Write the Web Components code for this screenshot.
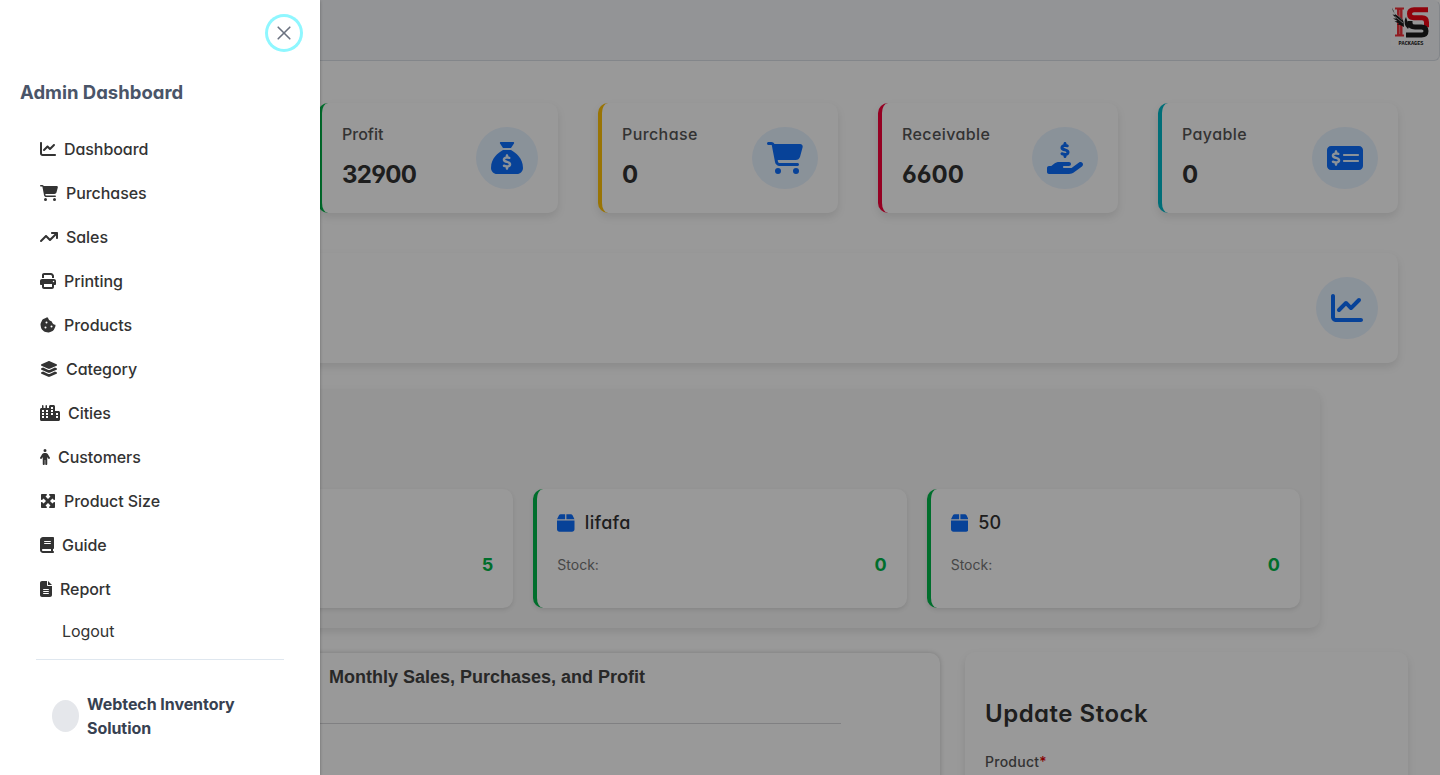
<!DOCTYPE html>
<html lang="en">
<head>
<meta charset="utf-8">
<title>Admin Dashboard</title>
<style>
html,body{margin:0;height:100%;overflow:hidden;background:#fff}
body{font-family:Inter,"Open Sans",sans-serif;font-feature-settings:"cv02","cv03","cv04","cv11"}
</style>
</head>
<body>
<inventory-app></inventory-app>
<script>
const ICONS={
chart:[512,'M64 64c0-17.7-14.3-32-32-32S0 46.3 0 64V400c0 44.2 35.8 80 80 80H480c17.7 0 32-14.3 32-32s-14.3-32-32-32H80c-8.8 0-16-7.2-16-16V64zm406.6 86.6c12.5-12.5 12.5-32.8 0-45.3s-32.8-12.5-45.3 0L320 210.7l-57.4-57.4c-12.5-12.5-32.8-12.5-45.3 0l-112 112c-12.5 12.5-12.5 32.8 0 45.3s32.8 12.5 45.3 0L240 221.3l57.4 57.4c12.5 12.5 32.8 12.5 45.3 0l128-128z'],
cart:[576,'M0 24C0 10.7 10.7 0 24 0H69.5c22 0 41.5 12.8 50.6 32h411c26.3 0 45.5 25 38.6 50.4l-41 152.3c-8.5 31.4-37 53.3-69.5 53.3H170.7l5.4 28.5c2.2 11.3 12.1 19.5 23.6 19.5H488c13.3 0 24 10.7 24 24s-10.7 24-24 24H199.7c-34.6 0-64.3-24.6-70.7-58.5L77.4 54.5c-.7-3.8-4-6.5-7.9-6.5H24C10.7 48 0 37.3 0 24zM128 464a48 48 0 1 1 96 0 48 48 0 1 1 -96 0zm336-48a48 48 0 1 1 0 96 48 48 0 1 1 0-96z'],
trend:[576,'M384 160c-17.7 0-32-14.3-32-32s14.3-32 32-32H544c17.7 0 32 14.3 32 32V288c0 17.7-14.3 32-32 32s-32-14.3-32-32V205.3L342.6 374.6c-12.5 12.5-32.8 12.5-45.3 0L192 269.3 54.6 406.6c-12.5 12.5-32.8 12.5-45.3 0s-12.5-32.8 0-45.3l160-160c12.5-12.5 32.8-12.5 45.3 0L320 306.7 466.7 160H384z'],
print:[512,'M128 0C92.7 0 64 28.7 64 64v96h64V64H354.7L384 93.3V160h64V93.3c0-17-6.7-33.3-18.7-45.3L400 18.7C388 6.7 371.7 0 354.7 0H128zM384 352v32 64H128V384 368 352H384zm64 32h32c17.7 0 32-14.3 32-32V256c0-35.3-28.7-64-64-64H64c-35.3 0-64 28.7-64 64v96c0 17.7 14.3 32 32 32H64v64c0 35.3 28.7 64 64 64H384c35.3 0 64-28.7 64-64V384zM432 248a24 24 0 1 1 0 48 24 24 0 1 1 0-48z'],
cookie:[512,'M257.5 27.6c-.8-5.4-4.9-9.8-10.3-10.6c-22.1-3.1-44.6 .9-64.4 11.4l-74 39.5C89.1 78.4 73.2 94.9 63.4 115L26.7 190.6c-9.8 20.1-13 42.9-9.1 64.9l14.5 82.8c3.9 22.1 14.6 42.3 30.7 57.9l60.3 58.4c16.1 15.6 36.6 25.6 58.7 28.7l83 11.7c22.1 3.1 44.6-.9 64.4-11.4l74-39.5c19.7-10.5 35.6-27 45.4-47.2l36.7-75.5c9.8-20.1 13-42.9 9.1-64.9c-.9-5.3-5.3-9.3-10.6-10.1c-51.5-8.2-92.8-47.1-104.5-97.4c-1.8-7.6-8-13.4-15.7-14.6c-54.6-8.7-97.7-52-106.2-106.8zM208 144a32 32 0 1 1 0 64 32 32 0 1 1 0-64zM144 336a32 32 0 1 1 64 0 32 32 0 1 1 -64 0zm224-64a32 32 0 1 1 0 64 32 32 0 1 1 0-64z'],
layers:[576,'M264.5 5.2c14.9-6.9 32.1-6.9 47 0l218.6 101c8.5 3.9 13.9 12.4 13.9 21.8s-5.4 17.9-13.9 21.8l-218.6 101c-14.9 6.9-32.1 6.9-47 0L45.9 149.8C37.4 145.8 32 137.3 32 128s5.4-17.9 13.9-21.8L264.5 5.2zM476.9 209.6l53.2 24.6c8.5 3.9 13.9 12.4 13.9 21.8s-5.4 17.9-13.9 21.8l-218.6 101c-14.9 6.9-32.1 6.9-47 0L45.9 277.8C37.4 273.8 32 265.3 32 256s5.4-17.9 13.9-21.8l53.2-24.6 152 70.2c23.4 10.8 50.4 10.8 73.8 0l152-70.2zm-152 198.2l152-70.2 53.2 24.6c8.5 3.9 13.9 12.4 13.9 21.8s-5.4 17.9-13.9 21.8l-218.6 101c-14.9 6.9-32.1 6.9-47 0L45.9 405.8C37.4 401.8 32 393.3 32 384s5.4-17.9 13.9-21.8l53.2-24.6 152 70.2c23.4 10.8 50.4 10.8 73.8 0z'],
city:[640,'M480 48c0-26.5-21.5-48-48-48H336c-26.5 0-48 21.5-48 48V96H224V24c0-13.3-10.7-24-24-24s-24 10.7-24 24V96H112V24c0-13.3-10.7-24-24-24S64 10.7 64 24V96H48C21.5 96 0 117.5 0 144V464c0 26.5 21.5 48 48 48H592c26.5 0 48-21.5 48-48V240c0-26.5-21.5-48-48-48H480V48zM64 160h64v64H64zM192 160h64v64h-64zM64 256h64v64H64zM192 256h64v64h-64zM64 352h64v64H64zM192 352h64v64h-64zM352 64h64v64h-64zM352 160h64v64h-64zM352 256h64v64h-64zM512 256h64v64h-64zM512 352h64v64h-64z'],
person:[320,'M112 48a48 48 0 1 1 96 0 48 48 0 1 1 -96 0zm40 304V480c0 17.7-14.3 32-32 32s-32-14.3-32-32V256.9L59.4 304.5c-9.1 15.1-28.8 20-43.9 10.9s-20-28.8-10.9-43.9l58.3-97c17.4-28.9 48.6-46.6 82.3-46.6h29.7c33.7 0 64.9 17.7 82.3 46.6l58.3 97c9.1 15.1 4.2 34.8-10.9 43.9s-34.8 4.2-43.9-10.9L232 256.9V480c0 17.7-14.3 32-32 32s-32-14.3-32-32V352H152z'],
expand:[512,'M200 32H56C42.7 32 32 42.7 32 56V200c0 9.7 5.8 18.5 14.8 22.2s19.3 1.7 26.2-5.2l40-40 79 79-79 79L73 295c-6.9-6.9-17.2-8.9-26.2-5.2S32 302.3 32 312V456c0 13.3 10.7 24 24 24H200c9.7 0 18.5-5.8 22.2-14.8s1.7-19.3-5.2-26.2l-40-40 79-79 79 79-40 40c-6.9 6.9-8.9 17.2-5.2 26.2s12.5 14.8 22.2 14.8H456c13.3 0 24-10.7 24-24V312c0-9.7-5.8-18.5-14.8-22.2s-19.3-1.7-26.2 5.2l-40 40-79-79 79-79 40 40c6.9 6.9 17.2 8.9 26.2 5.2s14.8-12.5 14.8-22.2V56c0-13.3-10.7-24-24-24H312c-9.7 0-18.5 5.8-22.2 14.8s-1.7 19.3 5.2 26.2l40 40-79 79-79-79 40-40c6.9-6.9 8.9-17.2 5.2-26.2S209.7 32 200 32z'],
book:[448,'M96 0C43 0 0 43 0 96V416c0 53 43 96 96 96H384h32c17.7 0 32-14.3 32-32s-14.3-32-32-32V384c17.7 0 32-14.3 32-32V32c0-17.7-14.3-32-32-32H384 96zm0 384H352v64H96c-17.7 0-32-14.3-32-32s14.3-32 32-32zm32-240c0-8.8 7.2-16 16-16H336c8.8 0 16 7.2 16 16s-7.2 16-16 16H144c-8.8 0-16-7.2-16-16zm16 48H336c8.8 0 16 7.2 16 16s-7.2 16-16 16H144c-8.8 0-16-7.2-16-16s7.2-16 16-16z'],
file:[384,'M64 0C28.7 0 0 28.7 0 64V448c0 35.3 28.7 64 64 64H320c35.3 0 64-28.7 64-64V160H256c-17.7 0-32-14.3-32-32V0H64zM256 0V128H384L256 0zM112 256H272c8.8 0 16 7.2 16 16s-7.2 16-16 16H112c-8.8 0-16-7.2-16-16s7.2-16 16-16zm0 64H272c8.8 0 16 7.2 16 16s-7.2 16-16 16H112c-8.8 0-16-7.2-16-16s7.2-16 16-16zm0 64H272c8.8 0 16 7.2 16 16s-7.2 16-16 16H112c-8.8 0-16-7.2-16-16s7.2-16 16-16z'],
sack:[512,'M320 96H192L144.6 24.9C137.5 14.2 145.1 0 157.9 0H354.1c12.8 0 20.4 14.2 13.3 24.9L320 96zM192 128H320c3.8 2.5 8.1 5.3 13 8.4C389.7 172.7 512 250.9 512 416c0 53-43 96-96 96H96c-53 0-96-43-96-96C0 250.9 122.3 172.7 179 136.4c4.8-3.1 9.2-5.9 13-8.4zm84 88c0-11-9-20-20-20s-20 9-20 20v14c-7.6 1.7-15.2 4.4-22.2 8.5c-13.9 8.3-25.9 22.8-25.8 43.9c.1 20.3 12 33.1 24.7 40.7c11 6.6 24.7 10.8 35.6 14l1.7 .5c12.6 3.8 21.8 6.8 28 10.7c5.1 3.2 5.8 5.4 5.9 8.2c.1 5-1.8 8-5.9 10.5c-5 3.1-12.9 5-21.4 4.7c-11.1-.4-21.5-3.9-35.1-8.5c-2.3-.8-4.7-1.6-7.2-2.4c-10.5-3.5-21.8 2.2-25.3 12.6s2.2 21.8 12.6 25.3c1.9 .6 4 1.3 6.1 2.1c8.3 2.9 17.9 6.2 28.2 8.4V424c0 11 9 20 20 20s20-9 20-20V410.2c8-1.7 16-4.5 23.2-9c14.3-8.9 25.1-24.1 24.8-45c-.3-20.3-11.7-33.4-24.6-41.6c-11.5-7.2-25.9-11.6-37.1-15l-.7-.2c-12.8-3.9-21.9-6.7-28.3-10.5c-5.2-3.1-5.3-4.9-5.3-6.7c0-3.7 1.4-6.5 6.2-9.3c5.4-3.2 13.6-5.1 21.5-5c9.6 .1 20.2 2.2 31.2 5.2c10.7 2.8 21.6-3.5 24.5-14.2s-3.5-21.6-14.2-24.5c-6.5-1.7-13.7-3.4-21.1-4.7V216z'],
hand:[576,'M312 24V34.5c6.4 1.2 12.6 2.7 18.2 4.2c12.8 3.4 20.4 16.6 17 29.4s-16.6 20.4-29.4 17c-10.9-2.9-21.1-4.9-30.2-5c-7.3-.1-14.7 1.7-19.4 4.4c-2.1 1.3-3.1 2.4-3.5 3c-.3 .5-.7 1.2-.7 2.8c0 .3 0 .5 0 .6c.2 .2 .9 1.2 3.3 2.6c5.8 3.5 14.4 6.2 27.4 10.1l.9 .3c11.1 3.3 25.9 7.8 37.9 15.3c13.7 8.6 26.1 22.9 26.4 44.9c.3 22.5-11.4 38.9-26.7 48.5c-6.7 4.1-13.9 7-21.3 8.8V232c0 13.3-10.7 24-24 24s-24-10.7-24-24V220.6c-9.5-2.3-18.2-5.3-25.6-7.8c-2.1-.7-4.1-1.4-6-2c-12.6-4.2-19.4-17.8-15.2-30.4s17.8-19.4 30.4-15.2c2.6 .9 5 1.7 7.3 2.5c13.6 4.6 23.4 7.9 33.9 8.3c8 .3 15.1-1.6 19.2-4.1c1.9-1.2 2.8-2.2 3.2-2.9c.4-.6 .9-1.8 .8-4.1l0-.2c0-1 0-2.1-4-4.6c-5.7-3.6-14.3-6.4-27.1-10.3l-1.9-.6c-10.8-3.2-25-7.5-36.4-14.4c-13.5-8.1-26.5-22-26.6-44.1c-.1-22.9 12.9-38.6 27.7-47.4c6.4-3.8 13.3-6.4 20.2-8.2V24c0-13.3 10.7-24 24-24s24 10.7 24 24zM568.2 336.3c13.1 17.8 9.3 42.8-8.5 55.9L433.1 485.5c-23.4 17.2-51.6 26.5-80.7 26.5H192 32c-17.7 0-32-14.3-32-32V416c0-17.7 14.3-32 32-32H68.8l44.9-36c22.7-18.2 50.9-28 80-28H272h16 64c17.7 0 32 14.3 32 32s-14.3 32-32 32H288 272c-8.8 0-16 7.2-16 16s7.2 16 16 16H392.6l119.7-88.2c17.8-13.1 42.8-9.3 55.9 8.5z'],
check:[576,'M64 64C28.7 64 0 92.7 0 128V384c0 35.3 28.7 64 64 64H512c35.3 0 64-28.7 64-64V128c0-35.3-28.7-64-64-64H64zM272 192H496c8.8 0 16 7.2 16 16s-7.2 16-16 16H272c-8.8 0-16-7.2-16-16s7.2-16 16-16zM256 304c0-8.8 7.2-16 16-16H496c8.8 0 16 7.2 16 16s-7.2 16-16 16H272c-8.8 0-16-7.2-16-16zM164 152v13.9c7.5 1.2 14.6 2.9 21.1 4.7c10.7 2.8 17 13.8 14.2 24.5s-13.8 17-24.5 14.2c-11-2.9-21.6-5-31.2-5.2c-7.9-.1-16 1.8-21.5 5c-4.8 2.8-6.2 5.6-6.2 9.3c0 1.8 .1 3.5 5.3 6.7c6.3 3.8 15.5 6.7 28.3 10.5l.7 .2c11.2 3.4 25.6 7.7 37.1 15c12.9 8.1 24.3 21.3 24.6 41.6c.3 20.9-10.5 36.1-24.8 45c-7.2 4.5-15.2 7.3-23.2 9V360c0 11-9 20-20 20s-20-9-20-20V345.4c-10.3-2.2-20-5.5-28.2-8.4c-2.1-.7-4.1-1.4-6.1-2.1c-10.5-3.5-16.1-14.8-12.6-25.3s14.8-16.1 25.3-12.6c2.5 .8 4.9 1.7 7.2 2.4c13.6 4.6 24 8.1 35.1 8.5c8.6 .3 16.5-1.6 21.4-4.7c4.1-2.5 6-5.5 5.9-10.5c0-2.9-.8-5-5.9-8.2c-6.3-4-15.4-6.9-28-10.7l-1.7-.5c-10.9-3.3-24.6-7.4-35.6-14c-12.7-7.7-24.6-20.5-24.7-40.7c-.1-21.1 11.8-35.7 25.8-43.9c6.9-4.1 14.5-6.8 22.2-8.5V152c0-11 9-20 20-20s20 9 20 20z'],
box:[448,'M50.7 58.5L0 160H208V32H93.7C75.5 32 58.9 42.3 50.7 58.5zM240 160H448L397.3 58.5C389.1 42.3 372.5 32 354.3 32H240V160zm208 32H0V416c0 35.3 28.7 64 64 64H384c35.3 0 64-28.7 64-64V192z']
};
class Base extends HTMLElement{
  connectedCallback(){ if(!this.shadowRoot) this.attachShadow({mode:'open'}).innerHTML=this.view(); }
  at(n){ return this.getAttribute(n)||''; }
}
customElements.define('fa-icon',class extends Base{
  view(){const [w,d]=ICONS[this.at('name')];
    return `<style>:host{display:block;flex:none}svg{display:block;height:1em;width:${w/512}em;fill:currentColor}</style><svg viewBox="0 0 ${w} 512"><path fill-rule="evenodd" d="${d}"/></svg>`;}
});
customElements.define('menu-item',class extends Base{
  view(){return `<style>:host{display:flex;align-items:center;gap:8px;height:44px;padding-left:20px;font-size:16px;font-weight:500;letter-spacing:-.06px;color:#333}</style><fa-icon name="${this.at('icon')}"></fa-icon><span><slot></slot></span>`;}
});
customElements.define('stat-card',class extends Base{
  view(){return `<style>
  :host{display:flex;box-sizing:border-box;height:110px;padding:20px;border-radius:10px;background:#fff;box-shadow:0 4px 8px rgba(0,0,0,.1);justify-content:space-between;align-items:center;border-left:4px solid var(--accent)}
  :host([plain]){border-left:0}
  .t{align-self:flex-start;padding-top:1px}
  .l{font-size:16px;line-height:20px;font-weight:500;color:#555;letter-spacing:var(--ls,.4px)}
  .v{font-size:24px;line-height:30px;font-weight:700;color:#333;margin-top:16px;letter-spacing:var(--vs,0)}
  .i{padding:15px;border-radius:50%;background:#e7f3ff;color:#0d6efd;font-size:32px}</style>
  <div class="t"><div class="l">${this.at('label')}</div><div class="v">${this.at('value')}</div></div>
  ${this.at('icon')?`<div class="i"><fa-icon name="${this.at('icon')}"></fa-icon></div>`:''}`;}
});
customElements.define('stock-card',class extends Base{
  view(){return `<style>
  :host{display:block;box-sizing:border-box;height:119px;padding:20px;border-radius:10px;background:#fff;border-left:4px solid #00b74a;box-shadow:0 2px 4px rgba(0,0,0,.1)}
  .h{display:flex;align-items:center;gap:10px;height:27px;color:#0d6efd;font-size:20px}
  .n{font-size:18px;font-weight:500;color:#333;letter-spacing:.3px}
  .r{display:flex;justify-content:space-between;align-items:center;height:27px;margin-top:15px;font-size:14px;color:#777}
  b{font-size:18px;font-weight:700;color:#00b74a}</style>
  <div class="h">${this.at('name')?'<fa-icon name="box"></fa-icon>':''}<span class="n">${this.at('name')}</span></div>
  <div class="r"><span>${this.at('name')?'Stock:':''}</span><b>${this.at('stock')}</b></div>`;}
});
customElements.define('brand-logo',class extends Base{
  view(){return `<style>:host{display:block;width:39px;height:40px}svg{display:block}text{font:700 5.4px "Liberation Mono",monospace}</style>
  <svg width="39" height="40" viewBox="0 0 39 40"><rect width="39" height="40" fill="#f8f9fb"/>
  <path fill="#f03038" d="M4 1.500h9v2h-1.500v25H13v2H4v-2h2V3.500H4z"/>
  <path d="M8.700 4v24" stroke="#f9a0a0" stroke-width=".8"/>
  <path d="M37 3.800H23q-4.500 0-4.500 4t4.500 4H31q4.500 0 4.500 4.500v5" stroke="#f00514" stroke-width="5" fill="none"/>
  <path d="M15 29h15.500q4.500 0 4.500-4t-4.500-4H24q-5 0-5-4V15" stroke="#1b1b1b" stroke-width="5" fill="none"/>
  <path fill="#1b1b1b" d="M1 1.500q1 7 8 9.500 4 2 4 10l-4-2-3-.5 2-1-4.500-2 3-.5-4.500-2.500 3.500 0-4-4 3 .5z"/>
  <path fill="#1b1b1b" d="M14.500 20q-2-5 .5-9 1 5 4 8l-2 4z"/>
  <path stroke="#f8f9fb" stroke-width=".6" fill="none" d="M2.500 5.500l8.500 8M4 10.500l8 6.500"/>
  <text x="7.500" y="38.500" textLength="25" lengthAdjust="spacingAndGlyphs" fill="#111">PACKAGES</text></svg>`;}
});
customElements.define('app-header',class extends Base{
  view(){return `<style>:host{display:flex;box-sizing:border-box;height:61px;justify-content:flex-end;align-items:flex-start;padding:5px 9px 0;background:#f5f7fa;border:1px solid #dadfe6;border-top-color:#f5f7fa;border-radius:6px}</style><brand-logo></brand-logo>`;}
});
customElements.define('chart-panel',class extends Base{
  view(){return `<style>:host{display:block;box-sizing:border-box;border-radius:10px;background:#fff;box-shadow:0 0 5px rgba(0,0,0,.2);padding:12px 99px 0 100px;font:700 18px/24px "Liberation Sans",Arial,sans-serif;color:#444;text-align:center}
  hr{border:0;border-top:1px solid #d5d5d9;margin:34px 0 0}</style><div><slot></slot></div><hr>`;}
});
customElements.define('update-panel',class extends Base{
  view(){return `<style>:host{display:block;box-sizing:border-box;border-radius:10px;background:#fff;box-shadow:0 4px 8px rgba(0,0,0,.1);padding:42px 20px 0}
  h2{margin:0;font-size:24px;line-height:40px;font-weight:600;color:#333;letter-spacing:.5px}
  label{display:block;margin-top:18px;font-size:14px;line-height:20px;font-weight:500;color:#555;letter-spacing:.25px}i{font-style:normal;color:#e00000}</style>
  <h2>Update Stock</h2><label>Product<i>*</i></label>`;}
});
customElements.define('side-drawer',class extends Base{
  view(){return `<style>
  :host{position:absolute;inset:0 auto 0 0;width:320px;background:#fff;box-shadow:0 1px 3px rgba(0,0,0,.3);box-sizing:border-box;padding:0 20px;display:flex;flex-direction:column}
  .top{display:flex;justify-content:flex-end;padding:17px 0 0}
  .close{display:grid;place-items:center;width:32px;height:32px;border-radius:50%;box-shadow:0 0 0 3px #8ff7ff}
  h3{margin:31px 0 0;font-size:18.5px;line-height:24px;font-weight:700;color:#4a5568}
  nav{margin-top:23px}
  .out{padding-left:42px;height:40px;display:flex;align-items:center;font-size:16px;letter-spacing:-.06px;color:#333}
  hr{width:248px;border:0;border-top:1px solid #dfe7ef;margin:8px 0 0;align-self:center}
  .who{display:flex;align-items:center;gap:8px;padding:32px 32px 0;font-weight:700;font-size:16px;line-height:24px;letter-spacing:-.06px;color:#374151}
  .av{width:27px;height:32px;border-radius:50%;background:#e5e7eb;flex:none}</style>
  <div class="top"><div class="close"><svg width="14" height="14" viewBox="0 0 14 14"><path d="M1.200 1.200l11.600 11.600M12.800 1.200L1.200 12.800" stroke="#6b7280" stroke-width="1.600" stroke-linecap="round"/></svg></div></div>
  <h3>Admin Dashboard</h3>
  <nav>
  <menu-item icon="chart">Dashboard</menu-item><menu-item icon="cart">Purchases</menu-item><menu-item icon="trend">Sales</menu-item><menu-item icon="print">Printing</menu-item><menu-item icon="cookie">Products</menu-item><menu-item icon="layers">Category</menu-item><menu-item icon="city">Cities</menu-item><menu-item icon="person">Customers</menu-item><menu-item icon="expand">Product Size</menu-item><menu-item icon="book">Guide</menu-item><menu-item icon="file">Report</menu-item>
  </nav>
  <div class="out">Logout</div><hr>
  <div class="who"><div class="av"></div><div>Webtech Inventory Solution</div></div>`;}
});
customElements.define('inventory-app',class extends Base{
  view(){return `<style>
  :host{display:block;position:relative;height:775px;overflow:hidden}
  .stats{display:grid;grid-template-columns:repeat(5,240px);gap:40px;padding:42px 42px 0 38px}
  .wide{grid-column:1/-1}
  .stock{display:grid;grid-template-columns:repeat(3,1fr);gap:20px;margin:26px 120px 0;padding:100px 20px 20px;border-radius:10px;background:#f8f8f8;box-shadow:0 4px 8px rgba(0,0,0,.1)}
  .low{display:flex;gap:25px;padding:24px 32px 0 33px;height:300px}
  chart-panel{width:907px;margin-top:1px}update-panel{width:443px}
  .mask{position:absolute;inset:0;background:rgba(0,0,0,.4)}</style>
  <app-header></app-header>
  <div class="stats">
  <stat-card style="--accent:#0d6efd"></stat-card>
  <stat-card style="--accent:#00b74a;--ls:0;--vs:-.7px" label="Profit" value="32900" icon="sack"></stat-card>
  <stat-card style="--accent:#ffc107" label="Purchase" value="0" icon="cart"></stat-card>
  <stat-card style="--accent:#f8003a" label="Receivable" value="6600" icon="hand"></stat-card>
  <stat-card style="--accent:#00b8c8" label="Payable" value="0" icon="check"></stat-card>
  <stat-card class="wide" plain icon="chart"></stat-card>
  </div>
  <div class="stock"><stock-card stock="5"></stock-card><stock-card name="lifafa" stock="0"></stock-card><stock-card name="50" stock="0"></stock-card></div>
  <div class="low"><chart-panel>Monthly Sales, Purchases, and Profit</chart-panel><update-panel></update-panel></div>
  <div class="mask"></div><side-drawer></side-drawer>`;}
});
</script>
</body>
</html>
